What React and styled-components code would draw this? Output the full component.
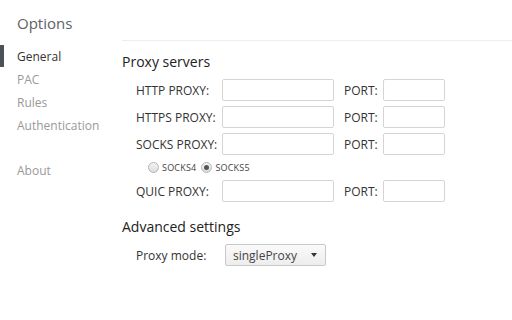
import React from "react";
import styled, { createGlobalStyle } from "styled-components";

const GlobalStyle = createGlobalStyle`
  html, body {
    margin: 0;
    padding: 0;
    background: #fff;
  }
  body {
    font-family: "Open Sans", "DejaVu Sans", sans-serif;
    color: #333;
  }
`;

const Page = styled.div`
  display: flex;
  width: 512px;
  height: 320px;
  overflow: hidden;
`;

const Sidebar = styled.div`
  width: 122px;
  flex-shrink: 0;
`;

const Title = styled.h1`
  margin: 0;
  padding: 12px 0 0 17px;
  height: 34px;
  box-sizing: border-box;
  font-size: 15px;
  font-weight: 400;
  color: #5c6166;
  line-height: 22px;
`;

const Nav = styled.ul`
  list-style: none;
  margin: 11px 0 0;
  padding: 0;
`;

const NavItem = styled.li`
  position: relative;
  height: 23px;
  line-height: 23px;
  padding-left: 17px;
  font-size: 12px;
  color: ${({ active }) => (active ? "#333" : "#999")};
  margin-top: ${({ spaced }) => (spaced ? "22px" : "0")};

  &::before {
    content: "";
    display: ${({ active }) => (active ? "block" : "none")};
    position: absolute;
    left: 0;
    top: 0;
    width: 4px;
    height: 22px;
    background: #4d5259;
  }
`;

const Main = styled.div`
  flex: 1;
  padding-top: 40px;
`;

const Divider = styled.div`
  height: 1px;
  background: #eee;
`;

const Section = styled.section`
  padding-top: ${({ top }) => top}px;
`;

const Heading = styled.h2`
  margin: 0 0 7px;
  font-size: 14px;
  font-weight: 400;
  line-height: 20px;
  color: #222;
`;

const Rows = styled.div`
  display: flex;
  flex-direction: column;
  gap: 5px;
  padding-left: 14px;
`;

const Row = styled.div`
  display: flex;
  align-items: center;
  height: 22px;
  padding-left: ${({ indent }) => indent || 0}px;
`;

const Label = styled.label`
  width: ${({ w }) => w}px;
  flex-shrink: 0;
  font-size: 12px;
  color: #333;
`;

const TextInput = styled.input`
  box-sizing: border-box;
  width: ${({ w }) => w}px;
  height: 22px;
  margin: 0 10px 0 0;
  border: 1px solid #d5d5d5;
  border-radius: 2px;
  background: #fff;
  outline: none;
`;

const RadioRow = styled.div`
  display: flex;
  align-items: center;
  gap: 3px;
  height: 15px;
  padding-left: 12px;
`;

const Radio = styled.span`
  box-sizing: border-box;
  width: 11px;
  height: 11px;
  border-radius: 50%;
  border: 1px solid #b5b5b5;
  background: linear-gradient(#f4f4f4, #dcdcdc);
  display: flex;
  align-items: center;
  justify-content: center;

  &::after {
    content: "";
    display: ${({ checked }) => (checked ? "block" : "none")};
    width: 5px;
    height: 5px;
    border-radius: 50%;
    background: #555;
  }
`;

const RadioText = styled.span`
  font-size: 9px;
  color: #444;
  margin-right: 2px;
  letter-spacing: 0.2px;
`;

const Select = styled.div`
  box-sizing: border-box;
  width: 101px;
  height: 22px;
  display: flex;
  align-items: center;
  justify-content: space-between;
  padding: 0 8px 0 7px;
  border: 1px solid #c8c8c8;
  border-radius: 2px;
  background: linear-gradient(#fafafa, #ededed);
  font-size: 12px;
  color: #444;
`;

const Caret = styled.span`
  width: 0;
  height: 0;
  border-left: 3.5px solid transparent;
  border-right: 3.5px solid transparent;
  border-top: 4px solid #333;
`;

const proxies = ["HTTP PROXY:", "HTTPS PROXY:", "SOCKS PROXY:"];

const ProxyRow = ({ label }) => (
  <Row>
    <Label w={86}>{label}</Label>
    <TextInput w={112} />
    <Label w={39}>PORT:</Label>
    <TextInput w={62} />
  </Row>
);

export default function App() {
  return (
    <Page>
      <GlobalStyle />
      <Sidebar>
        <Title>Options</Title>
        <Nav>
          <NavItem active>General</NavItem>
          <NavItem>PAC</NavItem>
          <NavItem>Rules</NavItem>
          <NavItem>Authentication</NavItem>
          <NavItem spaced>About</NavItem>
        </Nav>
      </Sidebar>
      <Main>
        <Divider />
        <Section top={11}>
          <Heading>Proxy servers</Heading>
          <Rows>
            {proxies.map((label) => (
              <ProxyRow key={label} label={label} />
            ))}
            <RadioRow>
              <Radio />
              <RadioText>SOCKS4</RadioText>
              <Radio checked />
              <RadioText>SOCKS5</RadioText>
            </RadioRow>
            <ProxyRow label="QUIC PROXY:" />
          </Rows>
        </Section>
        <Section top={15}>
          <Heading>Advanced settings</Heading>
          <Row indent={14}>
            <Label w={89}>Proxy mode:</Label>
            <Select>
              singleProxy
              <Caret />
            </Select>
          </Row>
        </Section>
      </Main>
    </Page>
  );
}
